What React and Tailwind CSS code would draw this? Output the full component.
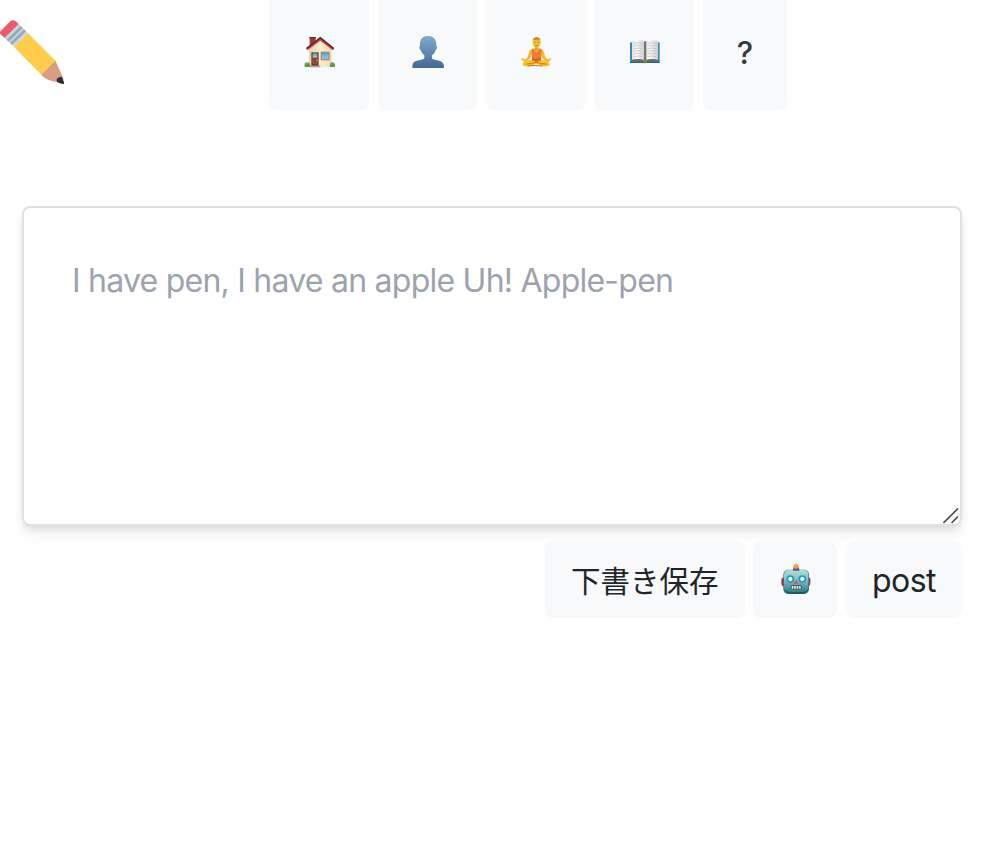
function PencilIcon() {
  return (
    <svg className="h-16 w-16 shrink-0" viewBox="0 30 192 192" aria-hidden="true">
      <defs>
        <clipPath id="pencil-box"><rect x="0" y="30" width="192" height="192" /></clipPath>
      </defs>
      <g clipPath="url(#pencil-box)">
        <path d="M3 62L31 34Q39 27 47 34L58 44L17 86L4 75Q-4 68 3 62Z" fill="#ea596e" />
        <path d="M14 83L56 42L84 70L42 111Z" fill="#ccd6dd" />
        <path d="M20 89L62 48L68 54L26 95ZM30 99L72 58L78 64L36 105Z" fill="#99aab5" />
        <path d="M42 111L84 70L165 151Q170 156 164 165L142 188Q130 200 124 194Z" fill="#ffcc4d" />
        <path d="M166 152L190 204Q192 222 174 217Q140 213 124 195Z" fill="#d99e82" />
        <path d="M185 200Q168 203 170 212Q171 219 190 222Q196 222 185 200Z" fill="#292f33" />
      </g>
    </svg>
  );
}

function HouseIcon() {
  return (
    <svg className="h-8 w-8 shrink-0" viewBox="39 30 96 96" aria-hidden="true">
      <defs>
        <linearGradient id="wall" x2="1"><stop stopColor="#e3cfaa" /><stop offset=".5" stopColor="#fbedcf" /><stop offset="1" stopColor="#ecd9b8" /></linearGradient>
        <linearGradient id="pane" x2="0" y2="1"><stop stopColor="#4a9bdc" /><stop offset="1" stopColor="#9bd5f6" /></linearGradient>
      </defs>
      <path d="M56 34H74V56L56 64Z" fill="#a83a31" />
      <path d="M55 33H75V37H55Z" fill="#702b29" />
      <path d="M54 64L88 38L122 66V122H54Z" fill="url(#wall)" />
      <path d="M88 34L129 68L125 73L88 44L49 73L46 68Z" fill="#e13d32" />
      <path d="M88 32L130 66L127 70L88 38L48 70L45 66Z" fill="#3d3437" />
      <path d="M61 79H83V120H61Z" fill="#783d29" />
      <path d="M65 82H79V95H65Z" fill="url(#pane)" />
      <path d="M65 99H71V114H65ZM74 99H79V114H74Z" fill="#98543a" />
      <circle cx="79" cy="103" r="2" fill="#f0c05a" />
      <path d="M89 77H116V103H89Z" fill="#a3906f" />
      <path d="M93 80H112V98H93Z" fill="url(#pane)" />
      <path d="M102 80V98" stroke="#7098ac" strokeWidth="1.5" />
      <path d="M57 119H88V124H57Z" fill="#aaa39b" />
      <path d="M42 123Q38 111 45 110Q53 106 56 114L57 123ZM117 123Q115 110 123 109Q133 108 132 122Z" fill="#58953a" />
      <path d="M44 117Q47 109 51 113M120 117Q124 108 128 114" stroke="#87bb54" strokeWidth="3" fill="none" />
    </svg>
  );
}

function PersonIcon() {
  return (
    <svg className="h-8 w-8 shrink-0" viewBox="36 30 96 96" aria-hidden="true">
      <defs>
        <linearGradient id="person" x2="0" y2="1"><stop stopColor="#80aace" /><stop offset="1" stopColor="#446991" /></linearGradient>
      </defs>
      <path d="M84 30C67 30 59 40 60 59C57 59 58 70 62 72C64 80 69 84 73 88V97C68 104 48 101 40 110Q37 114 37 126H132Q132 114 128 110C120 101 101 104 96 97V88C101 84 105 80 107 72C111 70 112 60 109 59C110 40 101 30 84 30Z" fill="url(#person)" />
    </svg>
  );
}

function MeditationIcon() {
  return (
    <svg className="h-8 w-8 shrink-0" viewBox="36 30 96 96" aria-hidden="true">
      <path d="M80 60H91V75H80Z" fill="#e3a020" />
      <path d="M72 70Q64 71 63 80L59 94L47 104L52 109L66 98L76 77ZM98 70Q107 71 108 80L112 94L124 104L119 109L104 98L94 77Z" fill="#f7b92d" />
      <path d="M50 99L39 96L40 100L48 107L54 105ZM121 99L130 96L129 100L122 107L116 105Z" fill="#f5b82b" />
      <path d="M69 101Q45 104 44 115Q44 123 67 120L85 114L105 120Q125 123 125 115Q123 104 101 101Z" fill="#fabb2c" />
      <path d="M55 114Q73 116 90 106M115 114Q97 116 80 106M59 120Q81 117 104 120" fill="none" stroke="#bd7b18" strokeWidth="3" />
      <path d="M71 70L77 67Q86 77 94 67L101 70L99 102Q86 108 72 102Z" fill="#f17936" />
      <path d="M72 95Q86 101 99 95L99 103Q86 108 72 103Z" fill="#dd5c27" />
      <path d="M77 68Q86 76 94 68L91 76Q85 81 80 76Z" fill="#efb52c" />
      <ellipse cx="86" cy="50" rx="12" ry="15" fill="#fac033" />
      <path d="M74 48Q73 36 79 36Q86 30 95 37Q100 40 97 49L95 42Q85 45 77 41Z" fill="#e1a126" />
      <path d="M78 39Q86 35 94 39" stroke="#8e5c1b" strokeWidth="2" fill="none" />
      <path d="M78 49H83M89 49H94M82 58Q86 61 90 58" stroke="#8c6021" strokeWidth="2" fill="none" />
    </svg>
  );
}

function BookIcon() {
  return (
    <svg className="h-8 w-8 shrink-0" viewBox="39 30 96 96" aria-hidden="true">
      <defs>
        <linearGradient id="page" x2="1"><stop stopColor="#e2e2e5" /><stop offset=".35" stopColor="#fafafa" /><stop offset="1" stopColor="#cfcfd2" /></linearGradient>
      </defs>
      <path d="M42 49H131V110H42Z" fill="#398bb5" />
      <path d="M42 107H131V111H42Z" fill="#246580" />
      <path d="M48 99H126V106H48Z" fill="#6f685c" />
      <path d="M48 45Q72 39 86 46V102Q68 97 48 101Z" fill="url(#page)" />
      <path d="M88 46Q102 39 126 45V101Q105 97 88 102Z" fill="url(#page)" />
      <path d="M84 46H91V106H84Z" fill="#77757a" />
      <path d="M53 52Q67 48 80 52M53 60Q67 56 80 60M53 68Q67 64 80 68M53 76Q67 72 80 76M53 84Q67 80 80 84M53 92Q67 88 80 92M95 52Q108 48 121 52M95 60Q108 56 121 60M95 68Q108 64 121 68M95 76Q108 72 121 76M95 84Q108 80 121 84M95 92Q108 88 121 92" fill="none" stroke="#b8b8bc" strokeWidth="2" />
      <path d="M81 103H94L91 112H84Z" fill="#977b31" />
    </svg>
  );
}

function RobotIcon() {
  return (
    <svg className="h-8 w-8 shrink-0" viewBox="42 24 96 96" aria-hidden="true">
      <defs>
        <linearGradient id="robot" x2="0" y2="1"><stop stopColor="#b1dedc" /><stop offset=".45" stopColor="#80b9bd" /><stop offset="1" stopColor="#2b747c" /></linearGradient>
      </defs>
      <path d="M48 68H58V94H50Q46 93 46 84V75ZM122 68H132Q134 73 133 84Q132 94 128 94H122Z" fill="#b82f3c" />
      <rect x="52" y="44" width="77" height="73" rx="15" fill="#396f7a" />
      <rect x="54" y="45" width="73" height="71" rx="14" fill="url(#robot)" />
      <path d="M54 100Q57 116 71 117H110Q125 116 127 100Q123 111 109 111H71Q58 111 54 100Z" fill="#205b65" />
      <path d="M83 37H98L101 47H80Z" fill="#625098" />
      <circle cx="90" cy="34" r="7.5" fill="#f39a23" />
      <circle cx="89" cy="31" r="3" fill="#ffc45b" />
      <circle cx="73" cy="72" r="11.5" fill="#159cc2" />
      <circle cx="109" cy="72" r="11.5" fill="#159cc2" />
      <circle cx="73" cy="72" r="6.5" fill="#e7ffff" />
      <circle cx="109" cy="72" r="6.5" fill="#e7ffff" />
      <path d="M90 74L98 86H83Z" fill="#e44c49" />
      <rect x="74" y="91" width="33" height="12" rx="3" fill="#334d54" />
      <path d="M77 93H82V101H77ZM84.5 93H89.5V101H84.5ZM92 93H97V101H92ZM99.5 93H104V101H99.5Z" fill="#edf6f5" />
    </svg>
  );
}

const navItems = [
  { label: "Home", Icon: HouseIcon },
  { label: "Profile", Icon: PersonIcon },
  { label: "Meditation", Icon: MeditationIcon },
  { label: "Book", Icon: BookIcon },
];

export default function App() {
  return (
    <div className="h-[866px] w-[990px] overflow-hidden bg-white font-['Inter','Noto_Sans_CJK_JP',sans-serif] text-[#212529]">
      <header className="flex h-[110px] items-start">
        <div className="w-[269.2px] shrink-0 pt-5">
          <PencilIcon />
        </div>
        <nav className="flex h-[110px] gap-[8.45px]">
          {navItems.map(({ label, Icon }) => (
            <button key={label} aria-label={label} className="flex w-[99.9px] justify-center rounded-b-lg bg-[#f8f9fb] pt-9 pl-[0.8px]">
              <Icon />
            </button>
          ))}
          <button className="flex w-[84px] justify-center rounded-b-lg bg-[#f8f9fb] pt-[29px] pl-px text-[31px] leading-[48px] font-medium text-[#343a40]">
            ?
          </button>
        </nav>
      </header>
      <main className="mt-24 ml-[22px] w-[940px]">
        <div className="relative h-80">
          <textarea
            className="block h-80 w-full resize-none rounded-lg border-2 border-[#dee2e6] bg-white px-12 pt-[49px] pb-12 text-[32px] leading-[48px] tracking-[-0.76px] shadow-[0_8px_12px_-2px_rgba(0,0,0,0.1),0_4px_8px_-2px_rgba(0,0,0,0.06)] outline-none placeholder:text-[#9ca3af]"
            placeholder="I have pen, I have an apple Uh! Apple-pen"
          />
          <svg className="pointer-events-none absolute right-[3px] bottom-[2px] h-4 w-4" viewBox="0 0 16 16" fill="none" stroke="#4a4a4a" strokeWidth="1.6" aria-hidden="true">
            <path d="M0.5 15L15 0.5M8.5 15L15 8.5" />
          </svg>
        </div>
        <div className="relative mt-4 flex h-[76px] justify-end gap-[9px] text-[32px] leading-[48px]">
          <button className="w-[200px] rounded-lg bg-[#f8f9fb] pt-px text-[29.5px] whitespace-nowrap">下書き保存</button>
          <button aria-label="Robot" className="-ml-[0.7px] flex w-[84px] justify-center rounded-lg bg-[#f8f9fb] pt-[21px] pl-0.5">
            <RobotIcon />
          </button>
          <button className="w-[116px] rounded-lg bg-[#f8f9fb] pt-0.5 tracking-[-0.5px]">post</button>
        </div>
      </main>
    </div>
  );
}
